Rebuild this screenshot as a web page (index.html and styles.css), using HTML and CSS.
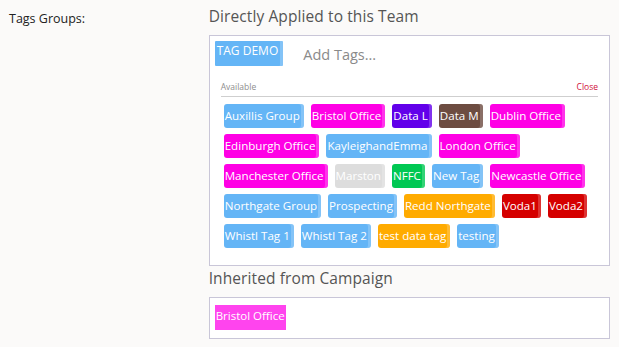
FILE: index.html
```html
<!DOCTYPE html>
<html>
<head>
<meta charset="utf-8">
<link rel="stylesheet" href="styles.css">
</head>
<body>
<div class="row">
  <div class="label">Tags Groups:</div>
  <div class="field">
    <div class="heading">Directly Applied to this Team</div>
    <div class="box">
      <div class="input-row">
        <span class="sel-chip">TAG DEMO</span>
        <span class="placeholder">Add Tags...</span>
      </div>
      <div class="avail-bar">
        <span class="avail">Available</span>
        <span class="close">Close</span>
      </div>
      <div class="chips">
        <span class="chip blue">Auxillis Group</span>
        <span class="chip magenta">Bristol Office</span>
        <span class="chip purple">Data L</span>
        <span class="chip brown">Data M</span>
        <span class="chip magenta">Dublin Office</span>
        <span class="chip magenta">Edinburgh Office</span>
        <span class="chip blue">KayleighandEmma</span>
        <span class="chip magenta">London Office</span>
        <span class="chip magenta">Manchester Office</span>
        <span class="chip grey">Marston</span>
        <span class="chip green">NFFC</span>
        <span class="chip blue">New Tag</span>
        <span class="chip magenta">Newcastle Office</span>
        <span class="chip blue">Northgate Group</span>
        <span class="chip blue">Prospecting</span>
        <span class="chip orange">Redd Northgate</span>
        <span class="chip red">Voda1</span>
        <span class="chip red">Voda2</span>
        <span class="chip blue">Whistl Tag 1</span>
        <span class="chip blue">Whistl Tag 2</span>
        <span class="chip orange">test data tag</span>
        <span class="chip blue">testing</span>
      </div>
    </div>
    <div class="heading second">Inherited from Campaign</div>
    <div class="box inherited">
      <span class="inh-chip">Bristol Office</span>
    </div>
  </div>
</div>
</body>
</html>
```
FILE: styles.css
```css
html, body {
  margin: 0;
  padding: 0;
  background: #fbfaf9;
  font-family: "Open Sans", "Noto Sans", sans-serif;
}
.row {
  display: flex;
  padding: 7px 9px 0 9px;
}
.label {
  width: 200px;
  font-size: 12.5px;
  color: #222;
  padding-top: 3px;
}
.field {
  width: 402px;
}
.heading {
  font-size: 15.5px;
  color: #555;
  line-height: 19px;
  letter-spacing: 0.1px;
}
.heading.second {
  margin-top: 3px;
}
.box {
  margin-top: 9px;
  border: 1px solid #c9c6d8;
  background: #fff;
  box-sizing: border-box;
}
.input-row {
  display: flex;
  align-items: flex-start;
  padding: 5px 5px 0 5px;
  height: 33px;
  box-sizing: border-box;
}
.sel-chip {
  display: inline-block;
  background: #64b5f6;
  color: #fff;
  font-size: 12px;
  height: 25px;
  line-height: 20px;
  padding: 0 5px 0 2px;
  box-shadow: inset -3px 0 rgba(255,255,255,0.2);
  border-radius: 1px;
}
.placeholder {
  margin-left: 20px;
  margin-top: 5px;
  font-size: 14.5px;
  color: #8a8a8a;
  line-height: 18px;
}
.avail-bar {
  display: flex;
  justify-content: space-between;
  margin: 12px 11px 0 11px;
  border-bottom: 1px solid #cfcfcf;
  font-size: 8.5px;
  line-height: 12px;
  padding-bottom: 3px;
}
.avail { color: #8e8e8e; }
.close { color: #d0103a; }
.chips {
  display: flex;
  flex-wrap: wrap;
  gap: 6px 7px;
  padding: 7px 10px 17px 14px;
}
.chip {
  display: inline-block;
  height: 24px;
  line-height: 23px;
  font-size: 11.6px;
  color: #fff;
  padding: 0 4px 0 1px;
  border-radius: 3px;
  box-shadow: inset -3px 0 rgba(255,255,255,0.2);
  white-space: nowrap;
}
.blue { background: #64b5f6; }
.magenta { background: #ff00e5; }
.purple { background: #6200ea; }
.brown { background: #6d4c41; }
.grey { background: #dddddd; }
.green { background: #00c853; }
.orange { background: #ffab00; }
.red { background: #d50000; }
.inherited {
  margin-top: 9px;
  height: 42px;
  padding: 5px;
}
.inh-chip {
  display: inline-block;
  background: #ff44ee;
  color: #fff;
  font-size: 11.5px;
  height: 25px;
  line-height: 22px;
  padding: 0 1px;
}
```
